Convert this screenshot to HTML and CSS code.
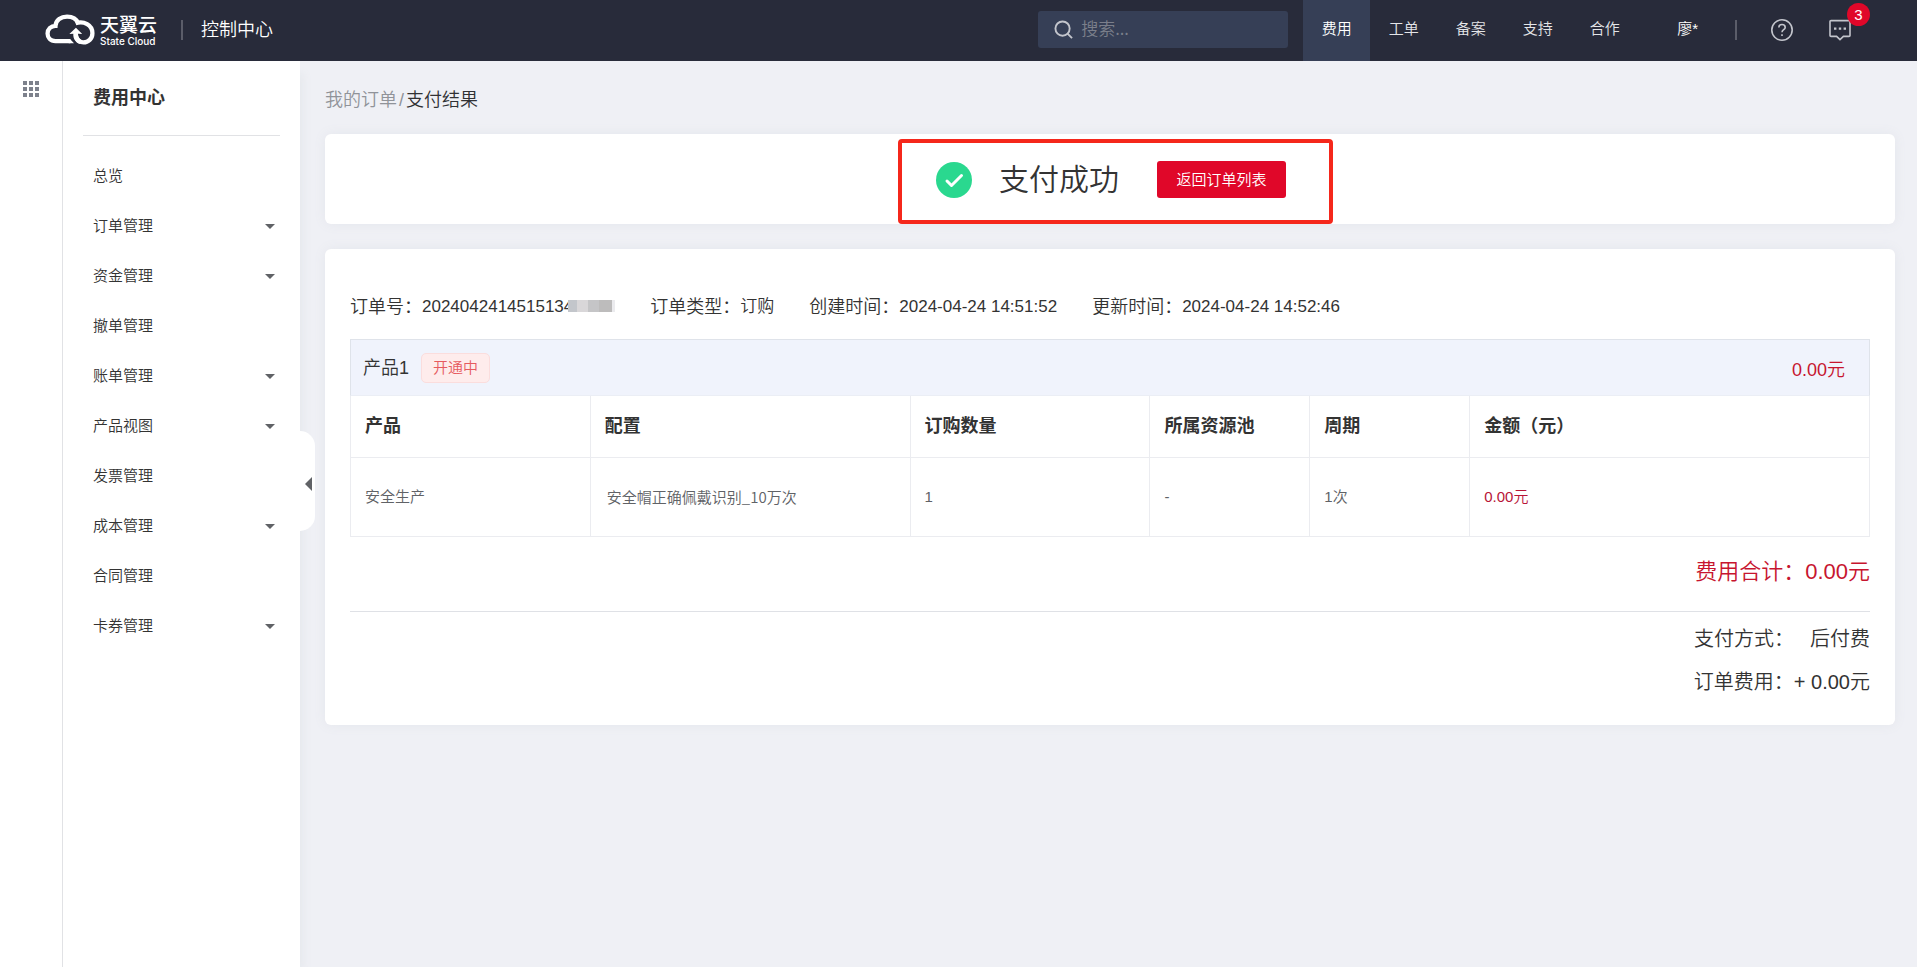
FILE: index.html
```html
<!DOCTYPE html>
<html lang="zh-CN">
<head>
<meta charset="utf-8">
<title>支付结果 - 费用中心</title>
<link rel="stylesheet" href="styles.css">
</head>
<body>
<header class="topbar">
  <a class="logo" href="#" aria-label="天翼云">
    <svg class="logo-mark" viewBox="134 43 150 94" aria-hidden="true">
      <g fill="none" stroke="#fff" stroke-width="13">
        <path d="M210 125H165C149 125 141 114 141 102C141 89 151 79 165 79C166 61 182 51 200 51C216 51 229 59 234 71"/>
        <path d="M226 71C251 63 277 76 277 101C277 118 264 129 250 129C240 129 232 124 228 115"/>
      </g>
      <path d="M209 118.500L221 131.500H205V118.500Z" fill="#fff"/>
      <path d="M207 104L227 85L246 104L235 103L233 103C234 112 238 119 246 123L238 134C226 129 218 118 219 103Z" fill="#fff"/>
    </svg>
    <span class="logo-text"><span class="logo-cn">天翼云</span><span class="logo-en">State Cloud</span></span>
  </a>
  <span class="bar-line"></span>
  <a class="console" href="#">控制中心</a>
  <label class="search">
    <svg viewBox="0 0 20 20" aria-hidden="true"><circle cx="9" cy="9" r="7.5"/><path d="M14 14L19 19"/></svg>
    <input type="search" placeholder="搜索..." aria-label="搜索">
  </label>
  <nav class="topnav">
    <a class="active" href="#">费用</a>
    <a href="#">工单</a>
    <a href="#">备案</a>
    <a href="#">支持</a>
    <a href="#">合作</a>
  </nav>
  <button class="user" type="button">廖*</button>
  <span class="bar-line"></span>
  <button class="icon-btn help" type="button" aria-label="帮助">
    <svg viewBox="0 0 24 24" aria-hidden="true"><circle cx="12" cy="12" r="10.2"/><path d="M8.8 9.6C8.8 7.6 10.2 6.5 12 6.5S15.2 7.6 15.2 9.4C15.2 11.6 12 11.8 12 14.3M12 16.2V18"/></svg>
  </button>
  <button class="icon-btn message" type="button" aria-label="消息">
    <svg viewBox="0 0 24 24" aria-hidden="true"><path d="M3 2.6H21Q22 2.6 22 3.6V17.4Q22 18.4 21 18.4H15.4L12 21.6L8.6 18.4H3Q2 18.4 2 17.4V3.6Q2 2.6 3 2.6Z"/><path d="M6 10.6H8.4M10.8 10.6H13.2M15.6 10.6H18" stroke-width="2.4"/></svg>
    <span class="badge">3</span>
  </button>
</header>

<div class="shell">
  <div class="rail">
    <button class="apps" type="button" aria-label="全部产品">
      <svg viewBox="0 0 16 16" aria-hidden="true"><path d="M0 0h4v4H0zM6 0h4v4H6zM12 0h4v4h-4zM0 6h4v4H0zM6 6h4v4H6zM12 6h4v4h-4zM0 12h4v4H0zM6 12h4v4H6zM12 12h4v4h-4z"/></svg>
    </button>
  </div>
  <aside class="sidebar">
    <h2>费用中心</h2>
    <nav class="menu">
      <a href="#">总览</a>
      <a class="more" href="#">订单管理</a>
      <a class="more" href="#">资金管理</a>
      <a href="#">撤单管理</a>
      <a class="more" href="#">账单管理</a>
      <a class="more" href="#">产品视图</a>
      <a href="#">发票管理</a>
      <a class="more" href="#">成本管理</a>
      <a href="#">合同管理</a>
      <a class="more" href="#">卡券管理</a>
    </nav>
    <button class="collapse" type="button" aria-label="收起菜单"></button>
  </aside>

  <main class="content">
    <div class="crumbs"><a href="#">我的订单</a><span>/</span><strong>支付结果</strong></div>

    <section class="card result">
      <div class="result-inner">
        <svg class="ok" viewBox="0 0 36 36" aria-hidden="true"><circle cx="18" cy="18" r="18"/><path d="M11 19L15.500 23.500L25.500 13.500"/></svg>
        <h1>支付成功</h1>
        <button class="primary" type="button">返回订单列表</button>
        <span class="highlight"></span>
      </div>
    </section>

    <section class="card order">
      <dl class="meta">
        <div><dt>订单号：</dt><dd class="number">2024042414515134<span class="mask"><i></i><i></i><i></i><i></i><i></i></span></dd></div>
        <div><dt>订单类型：</dt><dd>订购</dd></div>
        <div><dt>创建时间：</dt><dd>2024-04-24 14:51:52</dd></div>
        <div><dt>更新时间：</dt><dd>2024-04-24 14:52:46</dd></div>
      </dl>

      <div class="product-bar">
        <span class="product-name">产品1</span>
        <span class="tag">开通中</span>
        <span class="product-price">0.00元</span>
      </div>
      <table class="items">
        <colgroup><col class="c-product"><col class="c-config"><col class="c-count"><col class="c-pool"><col class="c-period"><col></colgroup>
        <thead>
          <tr><th>产品</th><th>配置</th><th>订购数量</th><th>所属资源池</th><th>周期</th><th>金额（元）</th></tr>
        </thead>
        <tbody>
          <tr><td>安全生产</td><td class="config">安全帽正确佩戴识别_10万次</td><td>1</td><td>-</td><td>1次</td><td class="price">0.00元</td></tr>
        </tbody>
      </table>

      <div class="total">费用合计：0.00元</div>
      <div class="pay"><span>支付方式：</span><span class="method">后付费</span></div>
      <div class="pay"><span>订单费用：</span><span>+ 0.00元</span></div>
    </section>
  </main>
</div>
</body>
</html>
```

FILE: styles.css
```css
* { box-sizing: border-box; }

body {
  margin: 0;
  min-height: 100vh;
  display: flex;
  flex-direction: column;
  background: #eff0f5;
  color: #333;
  font: 350 15px/20px "Liberation Sans", "Noto Sans CJK SC", sans-serif;
}

a { color: inherit; text-decoration: none; }
h1, h2, dl, dd { margin: 0; }
button { padding: 0; border: 0; background: none; color: inherit; font: inherit; cursor: pointer; }

/* Top bar */
.topbar {
  display: flex;
  align-items: center;
  height: 61px;
  padding: 0 65px 2px 45px;
  background: #282b3a;
  color: #e4e5e8;
}
.logo { display: flex; align-items: center; gap: 5px; color: #fff; }
.logo-mark { width: 50px; height: 31px; }
.logo-text { display: flex; flex-direction: column; padding-top: 2px; white-space: nowrap; }
.logo-cn { font-size: 19px; line-height: 20px; font-weight: 500; }
.logo-en { font: 500 10px/10px Inter, sans-serif; }
.bar-line { width: 2px; height: 20px; background: #5b5d69; }
.logo + .bar-line { margin: 0 18px 0 24px; }
.console { color: #fff; font-size: 18px; }

.search {
  display: flex;
  align-items: center;
  width: 250px;
  height: 37px;
  margin-left: auto;
  padding: 0 16px;
  gap: 8px;
  border-radius: 3px;
  background: #363f56;
}
.search svg { width: 19px; height: 19px; flex: none; fill: none; stroke: #c3c5cc; stroke-width: 2; }
.search input {
  flex: 1;
  min-width: 0;
  padding: 0 0 3px;
  border: 0;
  outline: 0;
  background: none;
  color: #fff;
  font: 350 17px/24px "Noto Sans CJK SC", sans-serif;
}
.search input::placeholder { color: #7b7f8b; opacity: 1; }

.topnav { display: flex; align-self: stretch; margin: 0 39px -2px 15px; }
.topnav a { display: flex; align-items: center; justify-content: center; width: 67px; padding-bottom: 4px; }
.topnav .active { background: #363f56; color: #fff; }
.user { margin-right: 37px; padding-bottom: 2px; color: #fff; }
.icon-btn { position: relative; width: 24px; height: 24px; }
.icon-btn svg { display: block; width: 24px; height: 24px; fill: none; stroke: #c3c5cc; stroke-width: 1.6; }
.help { margin: 0 34px 0 33px; }
.badge {
  position: absolute;
  top: -15px;
  right: -18px;
  width: 23px;
  height: 23px;
  border-radius: 50%;
  background: #e00729;
  color: #fff;
  font-size: 15px;
  line-height: 23px;
}

/* Left side */
.shell { flex: 1; display: flex; }
.rail { width: 63px; padding-top: 20px; border-right: 1px solid #e1e2e5; background: #fff; text-align: center; }
.apps svg { display: block; width: 16px; height: 16px; fill: #7d818c; }
.sidebar { position: relative; width: 237px; padding: 0 20px; background: #fff; box-shadow: 8px 8px 8px -4px #e7e9ee; }
.sidebar h2 { padding: 25px 10px; border-bottom: 1px solid #e1e2e5; font-size: 18px; line-height: 24px; font-weight: 700; }
.menu { display: flex; flex-direction: column; padding-top: 15px; }
.menu a { display: flex; align-items: center; justify-content: space-between; height: 50px; padding: 0 5px 0 10px; }
.menu .more::after { content: ""; border: 5px solid transparent; border-top-color: #606266; border-bottom: 0; }
.collapse {
  position: absolute;
  top: 370px;
  left: 100%;
  display: flex;
  align-items: center;
  width: 15px;
  height: 100px;
  padding: 6px 0 0 5px;
  border-radius: 0 15px 15px 0;
  background: #fff;
}
.collapse::before { content: ""; border: 7px solid transparent; border-right-color: #606266; border-left: 0; }

/* Main column */
.content { flex: 1; min-width: 0; padding: 27px 22px 25px 25px; }
.crumbs { display: flex; gap: 2px; margin-bottom: 22px; font-size: 18px; line-height: 24px; color: #909399; }
.crumbs strong { color: #303133; font-weight: 350; }
.card { border-radius: 6px; background: #fff; box-shadow: 0 0 12px #e4e6ec; }
.result { display: flex; justify-content: center; margin-bottom: 25px; padding: 27px 0 26px 2px; }
.result-inner { position: relative; display: flex; align-items: center; height: 37px; }
.ok { width: 36px; height: 36px; margin-right: 27px; fill: #2ad88f; }
.ok path { fill: none; stroke: #fff; stroke-width: 3; stroke-linecap: round; stroke-linejoin: round; }
.result h1 { margin-right: 38px; font-size: 30px; line-height: 37px; font-weight: 350; }
.primary { width: 129px; height: 37px; border-radius: 3px; background: #e00729; color: #fff; }
.highlight { position: absolute; inset: -22px -47px -26px -38px; border: 4px solid #f5271b; border-radius: 4px; pointer-events: none; }

.order { padding: 46px 25px 21px; }
.meta { display: flex; gap: 35px; margin-bottom: 20px; font-size: 17px; line-height: 24px; }
.meta div { display: flex; }
.meta dt { font-size: 18px; }
.number { position: relative; padding-right: 42px; }
.mask { position: absolute; top: 5px; right: 0; display: flex; height: 12px; }
.mask i { width: 11px; background: #d9d7d9; }
.mask i:first-child { width: 9px; background: #c3c6cb; }
.mask i:nth-child(3) { background: #c5c5c7; }
.mask i:nth-child(4) { width: 13px; background: #bdbcbc; }
.mask i:last-child { width: 3px; background: #ebebee; }

.product-bar {
  display: flex;
  align-items: center;
  height: 57px;
  padding: 0 24px 0 12px;
  border: 1px solid #dfe3ea;
  border-bottom-color: #ebeef5;
  background: #f0f3fc;
  font-size: 18px;
}
.tag { margin-left: 12px; padding: 4px 11px; border: 1px solid #fbdddd; border-radius: 5px; background: #feecec; color: #e65a5f; font-size: 15px; }
.product-price { margin-left: auto; padding-top: 4px; color: #c7152f; }

.items { width: 100%; table-layout: fixed; border-collapse: collapse; margin-bottom: 20px; }
.items th, .items td { padding: 0 14px; border: 1px solid #ebecf0; text-align: left; }
.items thead th { border-top: 0; }
.items th { height: 61px; font-size: 18px; font-weight: 700; }
.items td { height: 79px; color: #606266; }
.c-product, .c-count { width: calc(100% * 3 / 19); }
.c-config { width: calc(100% * 4 / 19); }
.c-pool, .c-period { width: calc(100% * 2 / 19); }
.items .config { padding-left: 16px; font-family: "Noto Sans CJK SC", sans-serif; }
.items .price { color: #b81537; }

.total { margin-bottom: 6px; padding-bottom: 24px; border-bottom: 1px solid #dfe1e6; color: #c7152f; font-size: 22px; line-height: 30px; text-align: right; }
.pay { display: flex; justify-content: flex-end; font-size: 20px; line-height: 43px; }
.method { margin-left: 16px; }
```
